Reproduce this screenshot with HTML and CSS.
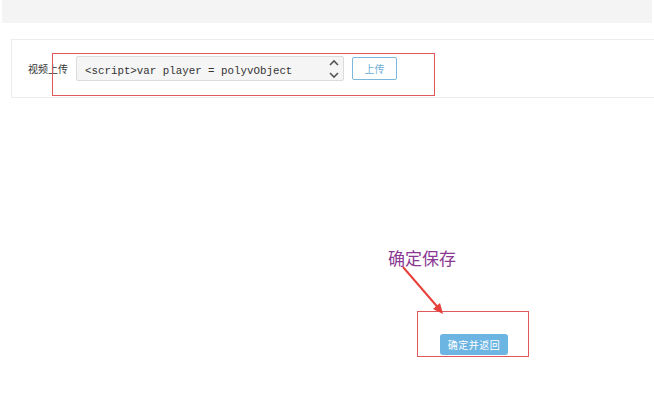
FILE: index.html
```html
<!DOCTYPE html>
<html lang="zh">
<head>
  <meta charset="UTF-8">
  <title>视频上传</title>
  <link rel="stylesheet" href="styles.css">
</head>
<body>

  <!-- Top bar -->
  <div class="topbar"></div>

  <!-- Upload panel -->
  <div class="panel">
    <div class="field">
      <span class="field-label">视频上传</span>
      <div class="code-box">
        <span class="code-text">&lt;script&gt;var player = polyvObject</span>
        <svg class="spin" width="12" height="22" viewBox="0 0 12 22">
          <path d="M2 7 L6 3 L10 7" fill="none" stroke="#555" stroke-width="1.6"/>
          <path d="M2 15 L6 19 L10 15" fill="none" stroke="#555" stroke-width="1.6"/>
        </svg>
      </div>
      <button class="btn-outline">上传</button>
    </div>
  </div>

  <!-- Actions -->
  <div class="actions">
    <button class="btn-primary">确定并返回</button>
  </div>

  <!-- Annotations -->
  <div class="mark mark-upload"></div>
  <div class="mark mark-save"></div>
  <div class="note">确定保存</div>
  <svg class="arrow" width="60" height="60" viewBox="0 0 60 60">
    <line x1="4" y1="2" x2="42" y2="46" stroke="#e8403a" stroke-width="2"/>
    <path d="M44 49 L34 44 L41 38 Z" fill="#e8403a"/>
  </svg>

</body>
</html>
```

FILE: styles.css
```css
body {
  margin: 0;
  padding: 0;
  background: #fff;
  font-family: "Noto Sans CJK SC", "Liberation Sans", sans-serif;
  overflow: hidden;
}

.topbar {
  height: 23px;
  margin: 0 2px;
  background: #f4f4f4;
}

.panel {
  margin: 16px -20px 0 11px;
  height: 57px;
  border: 1px solid #ececec;
  padding: 16px 0 0 16px;
  box-sizing: border-box;
  height: 59px;
}

.field {
  display: flex;
  align-items: center;
}

.field-label {
  width: 40px;
  font-size: 10px;
  color: #333;
  white-space: nowrap;
  margin-right: 8px;
}

.code-box {
  width: 268px;
  height: 25px;
  box-sizing: border-box;
  background: #f5f5f5;
  border: 1px solid #dcdcdc;
  border-radius: 2px;
  display: flex;
  align-items: center;
  justify-content: space-between;
  padding: 0 3px 0 8px;
}

.code-text {
  font-family: "Liberation Mono", monospace;
  font-size: 10.8px;
  color: #333;
  padding-top: 4px;
}

.spin {
  display: block;
}

.btn-outline {
  margin-left: 8px;
  width: 45px;
  height: 23px;
  background: #fff;
  border: 1px solid #7cb8db;
  border-radius: 2px;
  color: #6aaed6;
  font-family: "Noto Sans CJK SC", sans-serif;
  font-size: 10px;
  padding: 0;
}

.actions {
  padding: 232px 0 0 440px;
}

.btn-primary {
  width: 68px;
  height: 21px;
  background: #6cb5e2;
  border: none;
  border-radius: 3px;
  color: #fff;
  font-family: "Noto Sans CJK SC", sans-serif;
  font-size: 10px;
  letter-spacing: 0.5px;
  padding: 0;
}

.mark {
  position: absolute;
  border: 1px solid #e0585a;
  box-sizing: border-box;
}

.mark-upload {
  left: 52px;
  top: 53px;
  width: 383px;
  height: 43px;
}

.mark-save {
  left: 417px;
  top: 311px;
  width: 112px;
  height: 46px;
}

.note {
  position: absolute;
  left: 388px;
  top: 246px;
  font-size: 17px;
  color: #8b3a93;
  line-height: 24px;
}

.arrow {
  position: absolute;
  left: 399px;
  top: 265px;
}
```
